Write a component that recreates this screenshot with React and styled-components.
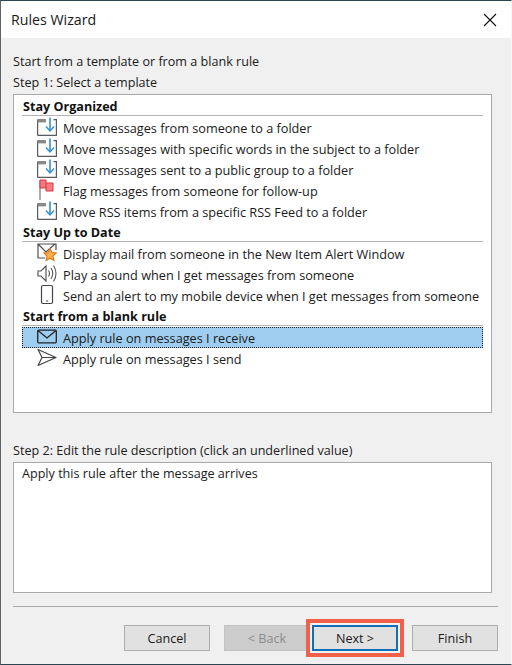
import styled, { createGlobalStyle } from "styled-components";

const GlobalStyle = createGlobalStyle`
    html, body {
        margin: 0;
        padding: 0;
        background: #f0f0f0;
    }
`;

const Window = styled.div`
    width: 512px;
    height: 665px;
    box-sizing: border-box;
    display: flex;
    flex-direction: column;
    border-top: 1px solid #2b4650;
    border-left: 1px solid #5c6468;
    border-right: 1px solid #f8f8f8;
    border-bottom: 1px solid #2b4650;
    background: #f0f0f0;
    font-family: "Open Sans", "Noto Sans", sans-serif;
    font-size: 12.6px;
    color: #1a1a1a;
    overflow: hidden;
`;

const TitleBar = styled.div`
    height: 37px;
    flex: none;
    background: #fff;
    display: flex;
    align-items: center;
    justify-content: space-between;
    padding: 0 14px 0 10px;
    font-size: 14.2px;
`;

const Body = styled.div`
    flex: 1;
    display: flex;
    flex-direction: column;
    padding: 15px 19px 0 12px;
`;

const Label = styled.div`
    height: 21px;
    line-height: 18px;
`;

const StepLabel = styled(Label)`
    height: 20px;
`;

const ListBox = styled.div`
    height: 319px;
    box-sizing: border-box;
    background: #fff;
    border: 1px solid #a9a9a9;
    padding: 1px 8px 0 8px;
`;

const GroupTitle = styled.div`
    height: 17px;
    padding: 2px 0 0 1px;
    line-height: 17px;
    font-weight: 700;
    color: #111;
    border-bottom: 1px solid #b4b4b4;
    margin-bottom: 1px;
`;

const Row = styled.div`
    height: 21px;
    box-sizing: border-box;
    display: flex;
    align-items: center;
    gap: 6px;
    padding-left: 15px;
    white-space: nowrap;
    background: ${(p) => (p.$selected ? "#9fcdf0" : "transparent")};
    outline: ${(p) => (p.$selected ? "1px dotted #222" : "none")};
    outline-offset: -1px;
`;

const IconSlot = styled.svg`
    width: 20px;
    height: 21px;
    flex: none;
    position: relative;
    top: -1px;
`;

const RowText = styled.span`
    font-size: 12.7px;
`;

const DescLabel = styled(StepLabel)`
    margin-top: 29px;
`;

const DescBox = styled.div`
    height: 131px;
    box-sizing: border-box;
    background: #fff;
    border: 1px solid #a9a9a9;
    padding: 2px 8px;
    line-height: 18px;
`;

const Divider = styled.div`
    height: 1px;
    margin: 13px -6px 0 0;
    background: #a8a8a8;
`;

const Footer = styled.div`
    display: flex;
    justify-content: flex-end;
    margin: 18px -6px 0 0;
`;

const Button = styled.button`
    width: 86px;
    height: 26px;
    padding: 0;
    box-sizing: border-box;
    margin-left: ${(p) => (p.$primary ? "2px" : "14px")};
    font: inherit;
    color: ${(p) => (p.disabled ? "#8c8c8c" : "#1a1a1a")};
    background: ${(p) => (p.disabled ? "#cccccc" : "#e1e1e1")};
    border: ${(p) => (p.$primary ? "2px solid #0f6fb8" : p.disabled ? "1px solid #c4c4c4" : "1px solid #adadad")};
    box-shadow: ${(p) => (p.$primary ? "0 0 0 2px #f4f4f4, 0 0 0 6px #f0604a" : "none")};
`;

const CloseIcon = () => (
    <svg width="14" height="14" viewBox="0 0 14 14">
        <path d="M1 1l12 12M13 1L1 13" stroke="#111" strokeWidth="1.1" fill="none" />
    </svg>
);

const FolderIcon = () => (
    <IconSlot viewBox="0 0 20 21">
        <path d="M.6 19.4V3.5M16.5 3.6h2.9v15.8H.6" stroke="#5a5a5a" strokeWidth="1.2" fill="none" />
        <path d="M.6 3h8.4v3.4H.6z" fill="#8a8a8a" />
        <path d="M13 1.5v13" stroke="#2f8fd8" strokeWidth="1.6" fill="none" />
        <path d="M9 10.5l4 4.5 4-4.5" stroke="#2f8fd8" strokeWidth="1.4" fill="none" />
    </IconSlot>
);

const FlagIcon = () => (
    <IconSlot viewBox="0 0 20 21">
        <path d="M3 1v20" stroke="#777" strokeWidth="1.2" />
        <path d="M3 1h6v3h7v8H9v-3H3z" fill="#f47a84" stroke="#e3303f" strokeWidth="1" />
        <path d="M9 4v5" stroke="#e3303f" strokeWidth="1" />
    </IconSlot>
);

const AlertMailIcon = () => (
    <IconSlot viewBox="0 0 20 21">
        <path d="M8 16H1V2h18v6M1 2l8 8 9-8" stroke="#4f4f4f" strokeWidth="1.2" fill="none" />
        <path d="M13 6.5l1.9 4 4.3.5-3.2 3 .9 4.4-3.9-2.2-3.9 2.2.9-4.4-3.2-3 4.3-.5z" fill="#f5b14a" stroke="#e0741c" strokeWidth="1.1" />
    </IconSlot>
);

const SoundIcon = () => (
    <IconSlot viewBox="0 0 20 21">
        <path d="M1 8h3l5-5v15l-5-5H1z" fill="#fff" stroke="#555" strokeWidth="1.2" />
        <path d="M11.5 7.5q2 3 0 6M14 5q3.5 5.5 0 11M16.5 2.5q5 8 0 16" stroke="#555" strokeWidth="1.1" fill="none" />
    </IconSlot>
);

const PhoneIcon = () => (
    <IconSlot viewBox="0 0 20 21">
        <rect x="4.5" y="1.5" width="11" height="18" rx="1.5" fill="#fff" stroke="#444" strokeWidth="1.2" />
        <path d="M9 17h2" stroke="#444" strokeWidth="1.2" />
    </IconSlot>
);

const MailIcon = () => (
    <IconSlot viewBox="0 0 20 21">
        <rect x="0.7" y="4.2" width="18.6" height="12.6" rx="1" fill="none" stroke="#222" strokeWidth="1.3" />
        <path d="M1 4.5l9 7.5 9-7.5" stroke="#222" strokeWidth="1.3" fill="none" />
    </IconSlot>
);

const SendIcon = () => (
    <IconSlot viewBox="0 0 20 21">
        <path d="M1 2.5L19 10.5 1 18.5 5 10.5zM5 10.5h14" stroke="#444" strokeWidth="1.2" fill="none" strokeLinejoin="round" />
    </IconSlot>
);

const groups = [
    {
        title: "Stay Organized",
        rows: [
            [FolderIcon, "Move messages from someone to a folder"],
            [FolderIcon, "Move messages with specific words in the subject to a folder"],
            [FolderIcon, "Move messages sent to a public group to a folder"],
            [FlagIcon, "Flag messages from someone for follow-up"],
            [FolderIcon, "Move RSS items from a specific RSS Feed to a folder"],
        ],
    },
    {
        title: "Stay Up to Date",
        rows: [
            [AlertMailIcon, "Display mail from someone in the New Item Alert Window"],
            [SoundIcon, "Play a sound when I get messages from someone"],
            [PhoneIcon, "Send an alert to my mobile device when I get messages from someone"],
        ],
    },
    {
        title: "Start from a blank rule",
        rows: [
            [MailIcon, "Apply rule on messages I receive", true],
            [SendIcon, "Apply rule on messages I send"],
        ],
    },
];

const App = () => {
    return (
        <>
            <GlobalStyle />
            <Window>
                <TitleBar>
                    <span>Rules Wizard</span>
                    <CloseIcon />
                </TitleBar>
                <Body>
                    <Label>Start from a template or from a blank rule</Label>
                    <StepLabel>Step 1: Select a template</StepLabel>
                    <ListBox>
                        {groups.map((group) => (
                            <div key={group.title}>
                                <GroupTitle>{group.title}</GroupTitle>
                                {group.rows.map(([Icon, text, selected]) => (
                                    <Row key={text} $selected={selected}>
                                        <Icon />
                                        <RowText>{text}</RowText>
                                    </Row>
                                ))}
                            </div>
                        ))}
                    </ListBox>
                    <DescLabel>Step 2: Edit the rule description (click an underlined value)</DescLabel>
                    <DescBox>Apply this rule after the message arrives</DescBox>
                    <Divider />
                    <Footer>
                        <Button>Cancel</Button>
                        <Button disabled>&lt; Back</Button>
                        <Button $primary>Next &gt;</Button>
                        <Button>Finish</Button>
                    </Footer>
                </Body>
            </Window>
        </>
    );
};

export default App;
